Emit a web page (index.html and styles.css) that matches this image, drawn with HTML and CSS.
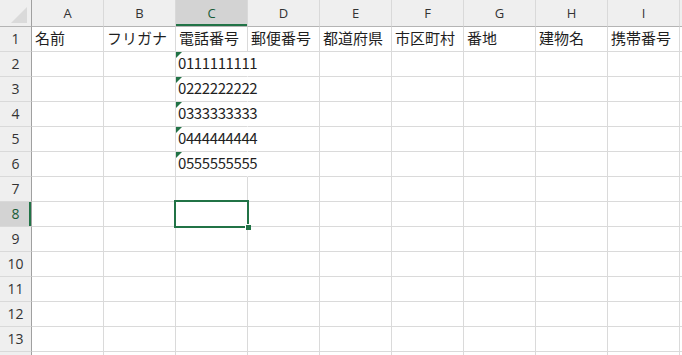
FILE: index.html
```html
<!DOCTYPE html>
<html lang="ja">
<head>
  <meta charset="UTF-8" />
  <meta name="viewport" content="width=device-width, initial-scale=1.0"/>
  <title>Sheet1</title>
  <link rel="stylesheet" href="styles.css">
</head>
<body>
  <table class="sheet">
    <thead>
      <tr>
        <th class="corner">
          <svg class="corner-mark" width="16" height="16" viewBox="0 0 16 16"><polygon points="16,0 16,16 0,16" fill="#dadada"/></svg>
        </th>
        <th class="col">A</th>
        <th class="col">B</th>
        <th class="col active">C</th>
        <th class="col">D</th>
        <th class="col">E</th>
        <th class="col">F</th>
        <th class="col">G</th>
        <th class="col">H</th>
        <th class="col">I</th>
        <th class="col"></th>
      </tr>
    </thead>
    <tbody>
      <tr><th class="row">1</th><td>名前</td><td>フリガナ</td><td>電話番号</td><td>郵便番号</td><td>都道府県</td><td>市区町村</td><td>番地</td><td>建物名</td><td>携帯番号</td><td></td></tr>
      <tr><th class="row">2</th><td></td><td></td><td class="num flag">0111111111</td><td></td><td></td><td></td><td></td><td></td><td></td><td></td></tr>
      <tr><th class="row">3</th><td></td><td></td><td class="num flag">0222222222</td><td></td><td></td><td></td><td></td><td></td><td></td><td></td></tr>
      <tr><th class="row">4</th><td></td><td></td><td class="num flag">0333333333</td><td></td><td></td><td></td><td></td><td></td><td></td><td></td></tr>
      <tr><th class="row">5</th><td></td><td></td><td class="num flag">0444444444</td><td></td><td></td><td></td><td></td><td></td><td></td><td></td></tr>
      <tr><th class="row">6</th><td></td><td></td><td class="num flag">0555555555</td><td></td><td></td><td></td><td></td><td></td><td></td><td></td></tr>
      <tr><th class="row">7</th><td></td><td></td><td></td><td></td><td></td><td></td><td></td><td></td><td></td><td></td></tr>
      <tr><th class="row active">8</th><td></td><td></td><td class="selected"></td><td></td><td></td><td></td><td></td><td></td><td></td><td></td></tr>
      <tr><th class="row">9</th><td></td><td></td><td></td><td></td><td></td><td></td><td></td><td></td><td></td><td></td></tr>
      <tr><th class="row">10</th><td></td><td></td><td></td><td></td><td></td><td></td><td></td><td></td><td></td><td></td></tr>
      <tr><th class="row">11</th><td></td><td></td><td></td><td></td><td></td><td></td><td></td><td></td><td></td><td></td></tr>
      <tr><th class="row">12</th><td></td><td></td><td></td><td></td><td></td><td></td><td></td><td></td><td></td><td></td></tr>
      <tr><th class="row">13</th><td></td><td></td><td></td><td></td><td></td><td></td><td></td><td></td><td></td><td></td></tr>
      <tr><th class="row"></th><td></td><td></td><td></td><td></td><td></td><td></td><td></td><td></td><td></td><td></td></tr>
    </tbody>
  </table>
</body>
</html>
```

FILE: styles.css
```css
html, body { margin: 0; padding: 0; background: #fff; overflow: hidden; }
body { font-family: "Noto Sans CJK JP", "Noto Sans", sans-serif; color: #1f1f1f; }

.sheet { border-collapse: separate; border-spacing: 0; table-layout: fixed; width: 752px; }
.sheet th, .sheet td { box-sizing: border-box; padding: 0; white-space: nowrap; }

/* header row */
.sheet thead th { height: 27px; background: #efefef; border-bottom: 1px solid #b4b4b4; border-right: 1px solid #d9d9d9;
  font-family: "Open Sans", "Noto Sans", sans-serif; font-weight: normal; font-size: 13px; color: #333; text-align: center; vertical-align: middle; }
.sheet thead th.corner { width: 32px; border-right: 1px solid #a0a0a0; position: relative; }
.corner-mark { position: absolute; right: 4px; bottom: 3px; }
.sheet thead th.col { width: 72px; }
.sheet thead th.active { background: #d3d3d3; color: #185c37; box-shadow: inset 0 -2px 0 #217346; }

/* row numbers */
.sheet th.row { width: 32px; height: 25px; background: #efefef; border-right: 1px solid #a0a0a0; border-bottom: 1px solid #d9d9d9;
  font-family: "Open Sans", "Noto Sans", sans-serif; font-weight: normal; font-size: 14px; line-height: 22px; color: #333;
  text-align: center; vertical-align: bottom; padding-bottom: 1px; }
.sheet th.row.active { background: #d3d3d3; color: #185c37; box-shadow: inset -2px 0 0 #217346; }

/* cells */
.sheet td { width: 72px; height: 25px; border-right: 1px solid #dadada; border-bottom: 1px solid #dadada;
  font-size: 15px; line-height: 22px; vertical-align: bottom; padding: 0 0 2px 3px; overflow: visible; }
.sheet td.num { font-size: 15px; letter-spacing: -0.4px; border-right-color: transparent; padding-left: 2px; }
.sheet td.flag { position: relative; }
.sheet td.flag::before { content: ""; position: absolute; left: 0; top: 0; border-top: 6px solid #217346; border-right: 6px solid transparent; }

.sheet td.selected { position: relative; }
.sheet td.selected::after { content: ""; position: absolute; left: -2px; top: -2px; right: -2px; bottom: -2px; border: 2px solid #217346; z-index: 2; }
.sheet td.selected::before { content: ""; position: absolute; right: -4px; bottom: -4px; width: 5px; height: 5px; background: #217346;
  border-left: 1px solid #fff; border-top: 1px solid #fff; z-index: 3; }
```
